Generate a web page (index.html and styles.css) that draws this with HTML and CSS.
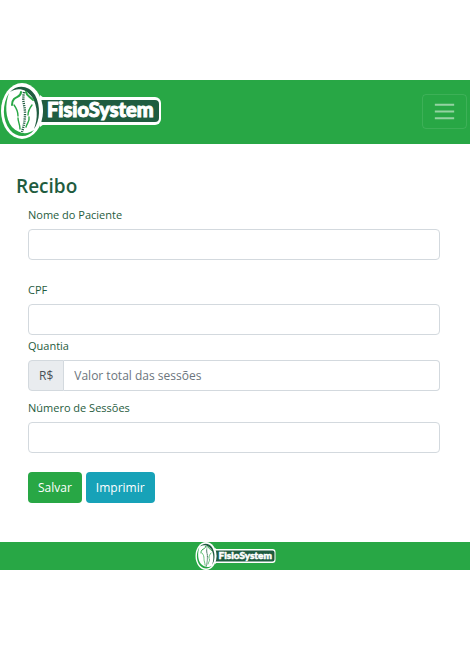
FILE: index.html
```html
<!DOCTYPE html>
<html lang="pt-BR">
<head>
<meta charset="utf-8">
<meta name="viewport" content="width=device-width, initial-scale=1">
<title>FisioSystem - Recibo</title>
<link rel="stylesheet" href="styles.css">
</head>
<body>
<header class="navbar">
  <a class="brand" href="#" aria-label="FisioSystem">
    <svg class="brand-logo" viewBox="0 1 162 56">
      <rect x="36" y="15" width="125" height="28" rx="6" fill="#fff"/>
      <path d="M40 13L44 16V42L40 45Z" fill="#fff"/>
      <path d="M40 18H155Q159 18 159 22V36Q159 40 155 40H40Q45 29 40 18Z" fill="#1f5c40"/>
      <ellipse cx="22" cy="29" rx="21" ry="28" fill="#fff"/>
      <path d="M10 10C17 2 29 3 35 13C41 24 40 39 34 47C38 37 38 24 32 15C26 7 18 5 10 10Z" fill="#1f5c40"/>
      <path d="M9 11C2 22 2 38 10 48C17 56 28 56 34 48C27 53 19 52 12 45C5 36 5 22 9 11Z" fill="#28a745"/>
      <g fill="none" stroke="#28a745" stroke-linecap="round">
        <path d="M21 10C21 15 17 14 14 17C12 19 12 21 12 23M26 10C27 15 30 14 33 18" stroke-width="2"/>
        <path d="M14 23C17 27 18 29 18 34M32 23C29 27 28 29 28 33M18 36C18 40 20 42 20 47M29 35C30 39 27 41 26 45" stroke-width="1.4"/>
      </g>
      <path d="M24 10C22 19 25 24 25 31S24 43 22 50" fill="none" stroke="#1f5c40" stroke-width="2.4" stroke-dasharray="1.2 1"/>
      <text class="logo-text" x="47" y="35">FisioSystem</text>
    </svg>
  </a>
  <button class="toggler" type="button" aria-label="Abrir menu">
    <svg class="toggler-icon" viewBox="0 0 30 30"><path d="M5 8H25M5 15H25M5 22H25" stroke="#fff" stroke-opacity=".5" stroke-width="2"/></svg>
  </button>
</header>

<main class="content">
  <h1 class="title">Recibo</h1>
  <form class="form">
    <div class="field field-wide">
      <label for="nome">Nome do Paciente</label>
      <input class="control" id="nome" type="text">
    </div>
    <div class="field">
      <label for="cpf">CPF</label>
      <input class="control" id="cpf" type="text">
    </div>
    <div class="field field-group">
      <label for="quantia">Quantia</label>
      <div class="input-group">
        <span class="prefix">R$</span>
        <input class="control" id="quantia" type="text" placeholder="Valor total das sessões">
      </div>
    </div>
    <div class="field">
      <label for="sessoes">Número de Sessões</label>
      <input class="control" id="sessoes" type="text">
    </div>
    <div class="actions">
      <button class="btn btn-save" type="submit">Salvar</button>
      <button class="btn btn-print" type="button">Imprimir</button>
    </div>
  </form>
</main>

<footer class="footer">
  <svg class="footer-logo" viewBox="0 1 162 56" role="img" aria-label="FisioSystem">
    <rect x="36" y="15" width="125" height="28" rx="6" fill="#fff"/>
    <path d="M40 13L44 16V42L40 45Z" fill="#fff"/>
    <path d="M40 18H155Q159 18 159 22V36Q159 40 155 40H40Q45 29 40 18Z" fill="#1f5c40"/>
    <ellipse cx="22" cy="29" rx="21" ry="28" fill="#fff"/>
    <path d="M10 10C17 2 29 3 35 13C41 24 40 39 34 47C38 37 38 24 32 15C26 7 18 5 10 10Z" fill="#1f5c40"/>
    <path d="M9 11C2 22 2 38 10 48C17 56 28 56 34 48C27 53 19 52 12 45C5 36 5 22 9 11Z" fill="#28a745"/>
    <g fill="none" stroke="#28a745" stroke-linecap="round">
      <path d="M21 10C21 15 17 14 14 17C12 19 12 21 12 23M26 10C27 15 30 14 33 18" stroke-width="2"/>
      <path d="M14 23C17 27 18 29 18 34M32 23C29 27 28 29 28 33M18 36C18 40 20 42 20 47M29 35C30 39 27 41 26 45" stroke-width="1.4"/>
    </g>
    <path d="M24 10C22 19 25 24 25 31S24 43 22 50" fill="none" stroke="#1f5c40" stroke-width="2.4" stroke-dasharray="1.2 1"/>
    <text class="logo-text" x="47" y="35">FisioSystem</text>
  </svg>
</footer>
</body>
</html>
```
FILE: styles.css
```css
* {
  box-sizing: border-box;
}

body {
  margin: 80px 1px 0 0;
  background: #fff;
  color: #1f5c40;
  font-family: "Segoe UI", "Open Sans", "Noto Sans", sans-serif;
  font-size: 12px;
  line-height: 18px;
}

.logo-text {
  fill: #fff;
  stroke: #fff;
  stroke-width: 1px;
  font-family: Lato, sans-serif;
  font-size: 20px;
  font-weight: 900;
}

.navbar {
  display: flex;
  align-items: center;
  justify-content: space-between;
  padding: 3px 3px 5px 0;
  background: #28a745;
}

.brand,
.brand-logo {
  display: block;
  width: 162px;
  height: 56px;
}

.toggler {
  display: flex;
  padding: 2px 7px;
  border: 1px solid rgba(255, 255, 255, 0.1);
  border-radius: 4px;
  background: transparent;
}

.toggler-icon {
  width: 29px;
  height: 29px;
}

.content {
  padding: 30px 16px 39px;
}

.title {
  margin: 0;
  font-size: 19px;
  font-weight: 600;
  line-height: 24px;
}

.form {
  padding: 7px 14px 0 12px;
}

.field {
  padding-top: 1px;
}

.field label {
  display: block;
  margin-bottom: 5px;
  font-size: 11px;
}

.field-wide {
  margin-bottom: 20px;
}

.field-group {
  margin: 1px 0 7px;
}

.control {
  display: block;
  width: 100%;
  height: 31px;
  padding: 0 10px;
  border: 1px solid #d3d9de;
  border-radius: 4px;
  background: #fff;
  color: #495057;
  font: inherit;
}

.control::placeholder {
  color: #6c757d;
  opacity: 1;
}

.input-group {
  display: flex;
}

.input-group .control {
  flex: 1;
  min-width: 0;
  border-left: 0;
  border-radius: 0 4px 4px 0;
}

.prefix {
  display: flex;
  align-items: center;
  padding: 0 10px;
  border: 1px solid #d3d9de;
  border-radius: 4px 0 0 4px;
  background: #e9ecef;
  color: #495057;
}

.actions {
  display: flex;
  gap: 4px;
  margin-top: 19px;
}

.btn {
  height: 31px;
  padding: 0 10px;
  border: 0;
  border-radius: 4px;
  color: #fff;
  font: inherit;
}

.btn-save {
  background: #28a745;
}

.btn-print {
  background: #17a2b8;
}

.footer {
  display: flex;
  justify-content: center;
  background: #28a745;
}

.footer-logo {
  width: 81px;
  height: 28px;
}
```
